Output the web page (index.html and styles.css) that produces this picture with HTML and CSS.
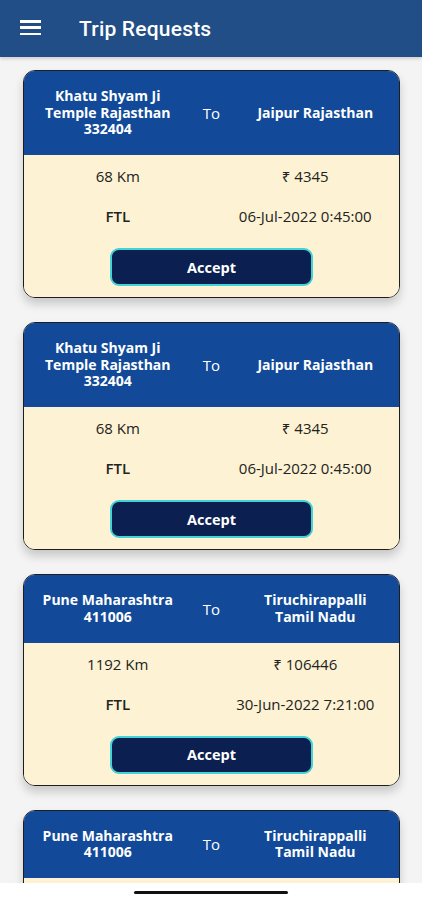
FILE: index.html
```html
<!DOCTYPE html>
<html lang="en">

<head>
  <meta charset="UTF-8" />
  <meta name="viewport" content="width=device-width, initial-scale=1.0" />
  <title>Trip Requests</title>
  <link rel="stylesheet" href="styles.css">
</head>

<body>

  <header class="appbar">
    <button class="menu-btn" aria-label="Menu">
      <div></div>
      <div></div>
      <div></div>
    </button>
    <h1>Trip Requests</h1>
  </header>

  <main class="list">

    <div class="card">
      <div class="card-head">
        <div class="place">Khatu Shyam Ji Temple Rajasthan 332404</div>
        <div class="to">To</div>
        <div class="place">Jaipur Rajasthan</div>
      </div>
      <div class="card-body">
        <div class="row">
          <span>68 Km</span>
          <span>₹ 4345</span>
        </div>
        <div class="row">
          <span class="load">FTL</span>
          <span>06-Jul-2022 0:45:00</span>
        </div>
        <button class="accept">Accept</button>
      </div>
    </div>

    <div class="card">
      <div class="card-head">
        <div class="place">Khatu Shyam Ji Temple Rajasthan 332404</div>
        <div class="to">To</div>
        <div class="place">Jaipur Rajasthan</div>
      </div>
      <div class="card-body">
        <div class="row">
          <span>68 Km</span>
          <span>₹ 4345</span>
        </div>
        <div class="row">
          <span class="load">FTL</span>
          <span>06-Jul-2022 0:45:00</span>
        </div>
        <button class="accept">Accept</button>
      </div>
    </div>

    <div class="card">
      <div class="card-head">
        <div class="place">Pune Maharashtra 411006</div>
        <div class="to">To</div>
        <div class="place">Tiruchirappalli Tamil Nadu</div>
      </div>
      <div class="card-body">
        <div class="row">
          <span>1192 Km</span>
          <span>₹ 106446</span>
        </div>
        <div class="row">
          <span class="load">FTL</span>
          <span>30-Jun-2022 7:21:00</span>
        </div>
        <button class="accept">Accept</button>
      </div>
    </div>

    <div class="card">
      <div class="card-head">
        <div class="place">Pune Maharashtra 411006</div>
        <div class="to">To</div>
        <div class="place">Tiruchirappalli Tamil Nadu</div>
      </div>
      <div class="card-body">
        <div class="row">
          <span>1192 Km</span>
          <span>₹ 106446</span>
        </div>
        <div class="row">
          <span class="load">FTL</span>
          <span>30-Jun-2022 7:21:00</span>
        </div>
        <button class="accept">Accept</button>
      </div>
    </div>

  </main>

  <!-- barra inferior do sistema -->
  <div class="home-bar">
    <div></div>
  </div>

</body>

</html>
```

FILE: styles.css
```css
body {
  font-family: "Open Sans", "Noto Sans", sans-serif;
  margin: 0;
  padding: 0;
  background-color: #f4f4f4;
  color: #222;
}

.appbar {
  height: 57px;
  background-color: #214e86;
  display: flex;
  align-items: center;
  padding-left: 20px;
  box-shadow: 0 2px 3px rgba(0, 0, 0, 0.15);
}

.appbar h1 {
  margin: 0 0 0 38px;
  font-family: Roboto, sans-serif;
  font-size: 21px;
  font-weight: 500;
  color: white;
  letter-spacing: 0.2px;
}

.menu-btn {
  display: flex;
  flex-direction: column;
  justify-content: space-between;
  width: 21px;
  height: 15px;
  padding: 0;
  background-color: transparent;
  border: none;
  margin-top: -2px;
}

.menu-btn div {
  width: 21px;
  height: 2.5px;
  background-color: white;
}

.list {
  padding: 13px 22px 40px 23px;
}

.card {
  border: 1.5px solid #1e1e1e;
  border-radius: 12px;
  overflow: hidden;
  margin-bottom: 24px;
  box-shadow: 0 6px 10px rgba(0, 0, 0, 0.18);
}

.card-head {
  background-color: #124a99;
  color: white;
  display: grid;
  grid-template-columns: 1fr 40px 1fr;
  align-items: center;
  padding: 17px 0 17.5px;
}

.card-head .place {
  font-size: 14px;
  font-weight: bold;
  line-height: 16.5px;
  text-align: center;
  padding: 0 14px;
}

.card-head .to {
  font-size: 15px;
  text-align: center;
}

.card-body {
  background-color: #fdf2d3;
  padding: 1px 0 11px;
  display: flex;
  flex-direction: column;
  align-items: center;
}

.row {
  width: 100%;
  display: grid;
  grid-template-columns: 1fr 1fr;
  text-align: center;
  font-size: 15px;
  line-height: 40px;
}

.load {
  font-weight: 600;
}

.accept {
  margin-top: 12px;
  width: 203px;
  height: 38px;
  background-color: #0b1f50;
  border: 2px solid #41d3d6;
  border-radius: 9px;
  color: white;
  font-family: "Open Sans", sans-serif;
  font-size: 14.5px;
  font-weight: bold;
}

.home-bar {
  position: fixed;
  left: 0;
  bottom: 0;
  width: 100%;
  height: 17px;
  background-color: white;
  display: flex;
  justify-content: center;
  align-items: center;
}

.home-bar div {
  width: 154px;
  height: 3px;
  border-radius: 2px;
  background-color: #111;
  margin-top: 1px;
}
```
